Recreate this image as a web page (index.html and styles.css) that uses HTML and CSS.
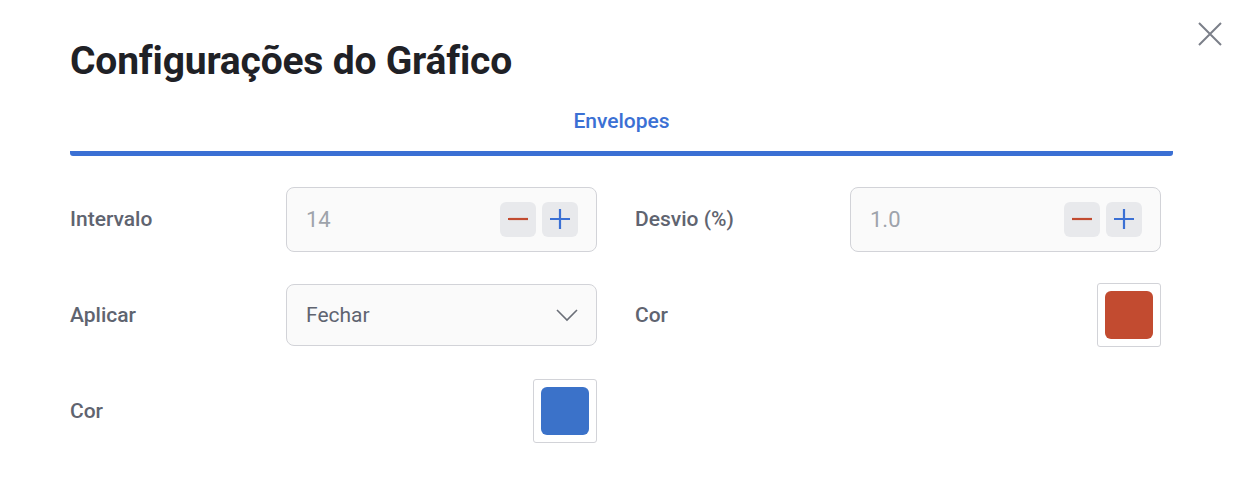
FILE: index.html
```html
<!DOCTYPE html>
<html lang="pt">
<head>
<meta charset="utf-8">
<title>Configurações do Gráfico</title>
<link rel="stylesheet" href="styles.css">
</head>
<body>
<div class="modal">
  <button class="close" aria-label="Fechar">
    <svg width="26" height="26" viewBox="0 0 26 26"><path d="M2 2L24 24M24 2L2 24" stroke="#7b7f89" stroke-width="2" fill="none"/></svg>
  </button>
  <h1 class="title">Configurações do Gráfico</h1>
  <div class="tabs">
    <div class="tab active">Envelopes</div>
  </div>
  <div class="grid">
    <div class="field">
      <span class="label">Intervalo</span>
      <div class="stepper">
        <span class="value">14</span>
        <div class="btns">
          <button class="step"><svg width="20" height="20" viewBox="0 0 20 20"><path d="M0 10H20" stroke="#c24b30" stroke-width="2.2"/></svg></button>
          <button class="step"><svg width="20" height="20" viewBox="0 0 20 20"><path d="M0 10H20M10 0V20" stroke="#3b70d4" stroke-width="2.2"/></svg></button>
        </div>
      </div>
    </div>
    <div class="field">
      <span class="label">Desvio (%)</span>
      <div class="stepper">
        <span class="value">1.0</span>
        <div class="btns">
          <button class="step"><svg width="20" height="20" viewBox="0 0 20 20"><path d="M0 10H20" stroke="#c24b30" stroke-width="2.2"/></svg></button>
          <button class="step"><svg width="20" height="20" viewBox="0 0 20 20"><path d="M0 10H20M10 0V20" stroke="#3b70d4" stroke-width="2.2"/></svg></button>
        </div>
      </div>
    </div>
    <div class="field">
      <span class="label">Aplicar</span>
      <div class="select">
        <span class="sel-text">Fechar</span>
        <svg width="22" height="13" viewBox="0 0 22 13"><path d="M1 1L11 11L21 1" stroke="#6b6f78" stroke-width="1.6" fill="none"/></svg>
      </div>
    </div>
    <div class="field">
      <span class="label">Cor</span>
      <div class="swatch"><span class="chip red"></span></div>
    </div>
    <div class="field">
      <span class="label">Cor</span>
      <div class="swatch"><span class="chip blue"></span></div>
    </div>
  </div>
</div>
</body>
</html>
```
FILE: styles.css
```css
* { box-sizing: border-box; }
html, body { margin: 0; padding: 0; background: #ffffff; }
body { font-family: Roboto, "Liberation Sans", sans-serif; }
.modal {
  position: relative;
  width: 1246px;
  height: 490px;
  padding: 36px 73px 0 70px;
}
.close {
  position: absolute;
  top: 21px;
  right: 23px;
  width: 26px;
  height: 26px;
  padding: 0;
  border: 0;
  background: none;
  display: flex;
}
.title {
  margin: 0;
  font-size: 39px;
  font-weight: 700;
  color: #1f2126;
  line-height: 50px;
  letter-spacing: -0.2px;
}
.tabs {
  margin-top: 21px;
  display: flex;
  justify-content: center;
}
.tab {
  flex: 1;
  text-align: center;
  font-size: 21px;
  font-weight: 500;
  color: #3b70d4;
  line-height: 28px;
  padding-bottom: 16px;
  border-bottom: 5px solid #3b70d4;
  border-radius: 0 0 3px 3px;
}
.grid {
  margin-top: 31px;
  display: grid;
  grid-template-columns: 527px 526px;
  column-gap: 38px;
  row-gap: 32px;
}
.field {
  display: flex;
  align-items: center;
  justify-content: space-between;
  height: 64px;
}
.label {
  font-size: 21px;
  font-weight: 500;
  color: #5f6470;
}
.stepper, .select {
  width: 311px;
  height: 65px;
  border: 1px solid #d2d3d8;
  border-radius: 8px;
  background: #fafafa;
  display: flex;
  align-items: center;
  justify-content: space-between;
  padding: 0 18px 0 19px;
}
.value {
  font-size: 22px;
  color: #9ea3ab;
}
.btns { display: flex; gap: 6px; }
.step {
  width: 36px;
  height: 35px;
  border: 0;
  border-radius: 6px;
  background: #e8e9ec;
  padding: 0;
  display: flex;
  align-items: center;
  justify-content: center;
}
.select { height: 62px; padding-right: 18px; }
.sel-text {
  font-size: 21px;
  color: #5f6470;
}
.swatch {
  width: 64px;
  height: 64px;
  border: 1px solid #d2d3d8;
  border-radius: 3px;
  display: flex;
  align-items: center;
  justify-content: center;
}
.chip {
  width: 48px;
  height: 48px;
  border-radius: 6px;
}
.chip.red { background: #c24b30; }
.chip.blue { background: #3b72c9; }
```
